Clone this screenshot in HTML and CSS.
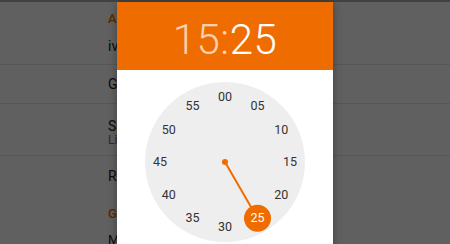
FILE: index.html
```html
<!DOCTYPE html>
<html>
<head>
<meta charset="utf-8">
<link rel="stylesheet" href="styles.css">
</head>
<body>
<div class="screen">
  <div class="statusbar"></div>
  <div class="list">
    <div class="cat cat-first">Account</div>
    <div class="item item-first">ivoox</div>
    <div class="item item-single">Gen</div>
    <div class="item item-two">
      <div class="title">Sub</div>
      <div class="sub">List</div>
    </div>
    <div class="item item-plain">Rem</div>
    <div class="cat cat-second">Glob</div>
    <div class="item item-last">Mor</div>
  </div>
  <div class="scrim"></div>
  <div class="dialog">
    <div class="header">
      <span class="hour">15</span><span class="colon">:</span><span class="minute">25</span>
    </div>
    <div class="body">
      <div class="clock">
        <svg class="hand" width="160" height="160" viewBox="0 0 160 160">
          <line x1="80" y1="80" x2="112.5" y2="136.3" stroke="#ef6c00" stroke-width="2"/>
          <circle cx="80" cy="80" r="3" fill="#ef6c00"/>
          <circle cx="112.5" cy="136.3" r="13.5" fill="#ef6c00"/>
        </svg>
        <span class="num n0">00</span>
        <span class="num n1">05</span>
        <span class="num n2">10</span>
        <span class="num n3">15</span>
        <span class="num n4">20</span>
        <span class="num n5 sel">25</span>
        <span class="num n6">30</span>
        <span class="num n7">35</span>
        <span class="num n8">40</span>
        <span class="num n9">45</span>
        <span class="num n10">50</span>
        <span class="num n11">55</span>
      </div>
    </div>
  </div>
</div>
</body>
</html>
```
FILE: styles.css
```css
html, body {
  margin: 0;
  padding: 0;
}
body {
  width: 450px;
  height: 244px;
  overflow: hidden;
  font-family: Roboto, "Noto Sans", sans-serif;
  background: #ffffff;
}
.screen {
  position: relative;
  width: 450px;
  height: 244px;
  overflow: hidden;
  background: #ffffff;
}
.statusbar {
  height: 2px;
  background: #b0b0b0;
}
.list {
  display: flex;
  flex-direction: column;
}
.cat {
  padding-left: 108px;
  color: #ef6c00;
  font-size: 13px;
  font-weight: 500;
}
.cat-first {
  height: 34px;
  line-height: 34px;
}
.cat-second {
  height: 36px;
  line-height: 36px;
}
.item {
  padding-left: 108px;
  color: #212121;
  font-size: 14px;
  border-bottom: 1px solid #e6e6e6;
}
.item-first {
  height: 28px;
  line-height: 20px;
}
.item-single {
  height: 38px;
  line-height: 38px;
}
.item-two {
  height: 51px;
  display: flex;
  flex-direction: column;
  justify-content: flex-start;
}
.item-two .title {
  margin-top: 14px;
  line-height: 16px;
}
.item-two .sub {
  line-height: 12px;
  font-size: 12px;
  color: #757575;
}
.item-plain {
  height: 40px;
  line-height: 40px;
  border-bottom: none;
}
.item-last {
  border-bottom: none;
  line-height: 16px;
  font-size: 13px;
}
.scrim {
  position: absolute;
  inset: 0;
  background: rgba(0, 0, 0, 0.625);
}
.dialog {
  position: absolute;
  left: 117px;
  top: 2px;
  width: 216px;
  height: 260px;
  background: #ffffff;
  box-shadow: 0 2px 8px rgba(0, 0, 0, 0.35);
}
.header {
  height: 68px;
  background: #ef6c00;
  display: flex;
  justify-content: center;
  align-items: center;
  padding-top: 7px;
  box-sizing: border-box;
  font-size: 42px;
  font-weight: 300;
  color: #ffffff;
  letter-spacing: 0.5px;
}
.hour, .colon {
  color: rgba(255, 255, 255, 0.7);
}
.body {
  display: flex;
  justify-content: center;
  padding-top: 12px;
}
.clock {
  position: relative;
  width: 160px;
  height: 160px;
  border-radius: 50%;
  background: #eeeeee;
}
.hand {
  position: absolute;
  left: 0;
  top: 0;
}
.num {
  position: absolute;
  transform: translate(-50%, -50%);
  font-size: 12.5px;
  line-height: 14px;
  color: #333333;
}
.num.sel {
  color: #ffffff;
}
.n0 { left: 80px; top: 15px; }
.n1 { left: 112.5px; top: 23.7px; }
.n2 { left: 136.3px; top: 47.5px; }
.n3 { left: 145px; top: 80px; }
.n4 { left: 136.3px; top: 112.5px; }
.n5 { left: 112.5px; top: 136.3px; }
.n6 { left: 80px; top: 145px; }
.n7 { left: 47.5px; top: 136.3px; }
.n8 { left: 23.7px; top: 112.5px; }
.n9 { left: 15px; top: 80px; }
.n10 { left: 23.7px; top: 47.5px; }
.n11 { left: 47.5px; top: 23.7px; }
```
